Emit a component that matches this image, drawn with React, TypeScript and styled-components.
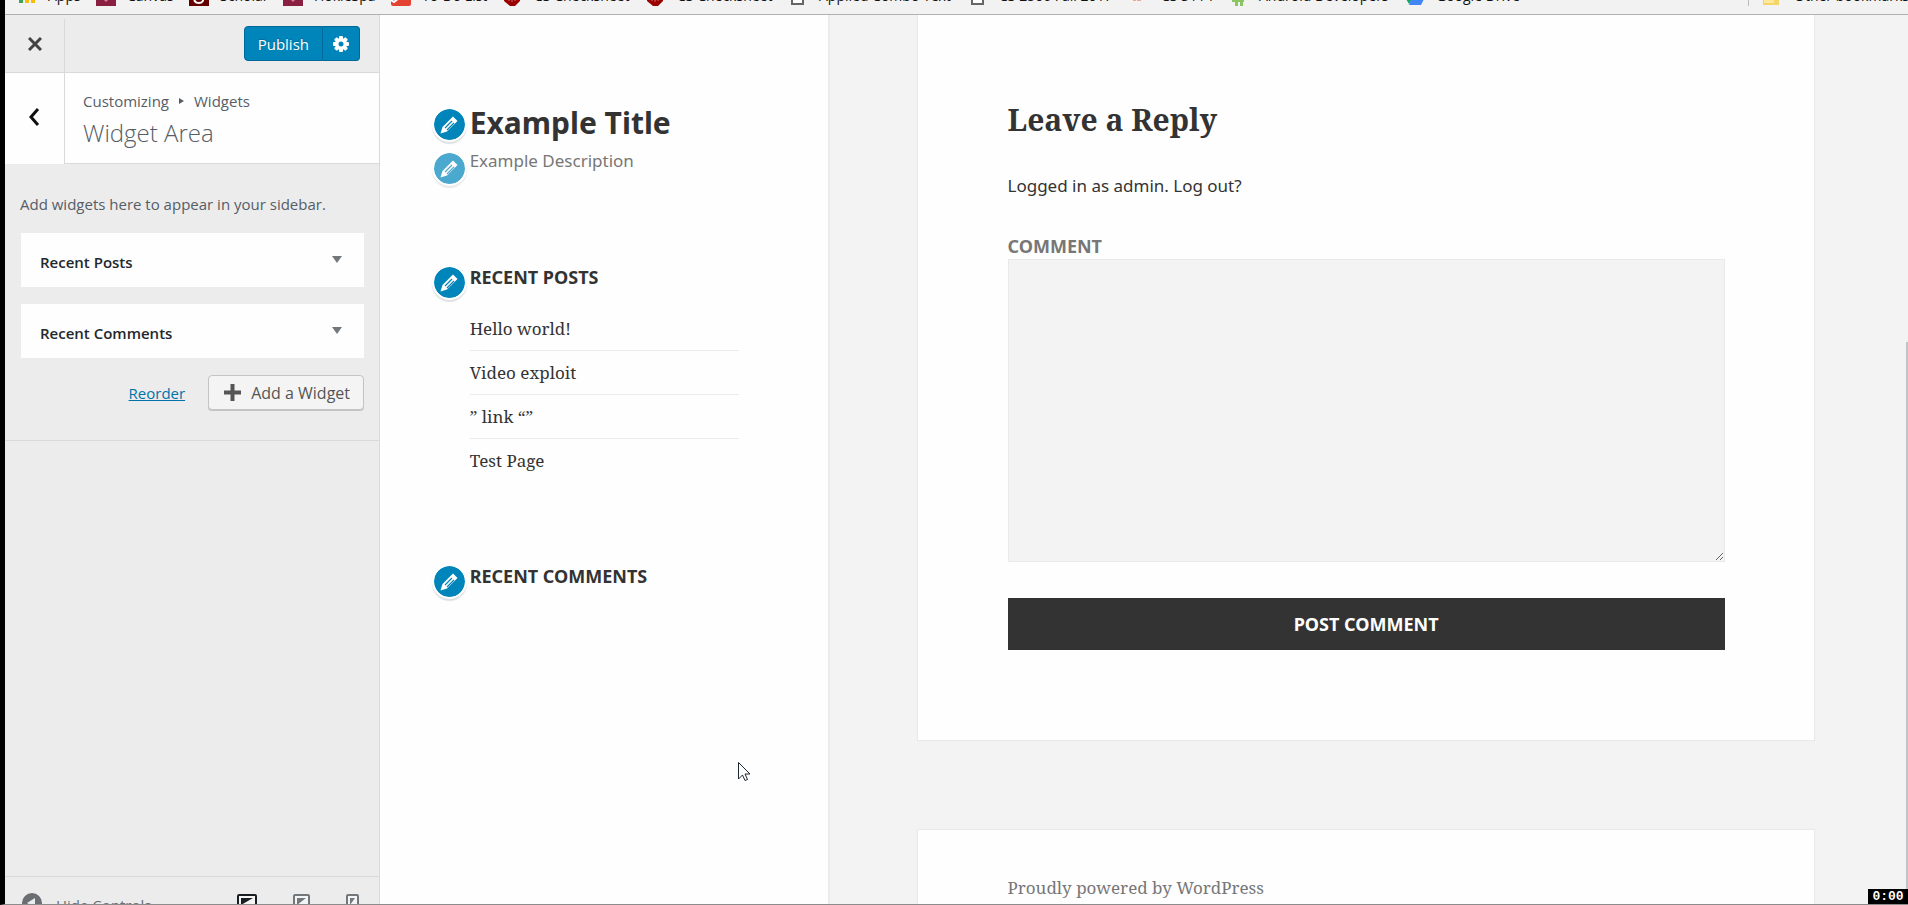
import React from "react";
import styled, { createGlobalStyle } from "styled-components";

const GlobalStyle = createGlobalStyle`
  *, *::before, *::after { box-sizing: border-box; }
  body { margin: 0; overflow: hidden; background: #f3f3f3; }
  h1, h2, h3, p, ul { margin: 0; padding: 0; font-weight: inherit; }
  ul { list-style: none; }
  button { font: inherit; cursor: pointer; margin: 0; }
  a { color: inherit; text-decoration: none; }
`;

const ui = `"Segoe UI", "Open Sans", "Noto Sans", sans-serif`;
const sans = `"Noto Sans", "Open Sans", sans-serif`;
const serif = `"Noto Serif", "DejaVu Serif Condensed", "DejaVu Serif", serif`;

const Screen = styled.div`
  position: relative;
  display: flex;
  flex-direction: column;
  height: 100vh;
  overflow: hidden;
  border-left: 5px solid #000;
  border-bottom: 1px solid #8c8c8c;
`;

/* ---------- bookmarks bar ---------- */

const BookmarksBar = styled.nav`
  flex: none;
  display: flex;
  align-items: flex-end;
  height: 15px;
  padding: 0 0 8px 12px;
  overflow: hidden;
  background: #f2f2f2;
  border-bottom: 1px solid #b1b1b1;
  font: 14px/20px ${ui};
  color: #111;
  white-space: nowrap;
`;

const Bookmark = styled.a<{ $width: number }>`
  flex: none;
  display: flex;
  align-items: flex-end;
  gap: 11px;
  width: ${(p) => p.$width}px;
  svg { flex: none; display: block; width: 20px; height: 20px; }
`;

const OtherBookmarks = styled(Bookmark)`
  margin-left: auto;
  padding-left: 14px;
  border-left: 1px solid #bbb;
`;

/* ---------- customizer panel ---------- */

const Workspace = styled.div`
  flex: 1;
  min-height: 0;
  display: flex;
`;

const Panel = styled.aside`
  flex: none;
  display: flex;
  flex-direction: column;
  width: 375px;
  background: #ececec;
  border-right: 1px solid #d9d9d9;
  font: 15px/24px ${ui};
  color: #555d66;
`;

const PanelHeader = styled.header`
  flex: none;
  display: flex;
  align-items: center;
  justify-content: space-between;
  height: 58px;
  padding: 4px 19px 0 0;
  border-bottom: 1px solid #d9d9d9;
`;

const IconButton = styled.button<{ $fill?: string }>`
  flex: none;
  display: flex;
  align-items: center;
  justify-content: center;
  align-self: stretch;
  width: 60px;
  padding: 0 0 4px;
  border: 0;
  border-right: 1px solid #d9d9d9;
  background: ${(p) => p.$fill || "transparent"};
  color: #444;
`;

const PublishGroup = styled.div`
  display: flex;
  height: 39px;
  padding-bottom: 4px;
`;

const PublishButton = styled.button`
  display: flex;
  align-items: center;
  justify-content: center;
  padding: 0 13px;
  background: #0085ba;
  border: 1px solid #006799;
  border-radius: 4px 0 0 4px;
  color: #fff;
  text-shadow: 0 -1px 1px #006799;
`;

const SettingsButton = styled(PublishButton)`
  width: 37px;
  padding: 0;
  border-left-width: 0;
  border-radius: 0 4px 4px 0;
`;

const SectionHead = styled.div`
  flex: none;
  display: flex;
  height: 91px;
  background: #fefefe;
`;

const SectionTitle = styled.div`
  flex: 1;
  padding: 16px 0 0 18px;
  border-bottom: 1px solid #d9d9d9;
`;

const Crumbs = styled.p`
  display: flex;
  align-items: center;
  gap: 10px;
`;

const PanelTitle = styled.h1`
  font-size: 24px;
  font-weight: 300;
  line-height: 40px;
`;

const SectionBody = styled.section`
  flex: none;
  display: flex;
  flex-direction: column;
  padding: 28px 15px 30px 16px;
  border-bottom: 1px solid #d9d9d9;
`;

const Hint = styled.p`
  margin: 0 0 17px -1px;
  white-space: nowrap;
`;

const WidgetCard = styled.button`
  display: flex;
  align-items: center;
  justify-content: space-between;
  height: 54px;
  margin-bottom: 17px;
  padding: 4px 22px 0 19px;
  border: 0;
  background: #fefefe;
  color: #23282d;
  font-weight: 600;
  svg { margin-bottom: 6px; }
`;

const WidgetActions = styled.div`
  display: flex;
  align-items: center;
  justify-content: flex-end;
  gap: 23px;
`;

const ReorderButton = styled.button`
  padding: 0;
  border: 0;
  background: none;
  color: #0073aa;
  text-decoration: underline;
`;

const AddButton = styled.button`
  display: flex;
  align-items: center;
  gap: 10px;
  height: 35px;
  padding: 0 13px 0 15px;
  background: #f4f4f4;
  border: 1px solid #c4c4c4;
  border-radius: 4px;
  box-shadow: 0 1px 0 #c4c4c4;
  color: #555;
  font-size: 16px;
  white-space: nowrap;
`;

const PanelFooter = styled.footer`
  flex: none;
  display: flex;
  align-items: flex-start;
  justify-content: space-between;
  height: 28px;
  margin-top: auto;
  padding: 16px 20px 0 17px;
  overflow: hidden;
  border-top: 1px solid #d9d9d9;
`;

const FooterButton = styled.button`
  display: flex;
  align-items: flex-start;
  gap: 14px;
  padding: 0;
  border: 0;
  background: none;
  color: #6a6e73;
`;

const Devices = styled.div`
  display: flex;
  gap: 36px;
`;

/* ---------- site preview ---------- */

const Preview = styled.main`
  flex: 1;
  display: grid;
  grid-template-columns: 5fr 1fr 10fr 1fr;
  padding-right: 4px;
  background: #f3f3f3;
  font-family: ${sans};
  color: #333;
`;

const SiteSidebar = styled.div`
  padding: 86px 20% 0;
  background: #fefefe;
  box-shadow: 0 0 0 2px #ebebeb;
  clip-path: inset(0 -2px 0 0);
`;

const Branding = styled.header`
  padding-bottom: 6px;
`;

const Editable = styled.div`
  position: relative;
`;

const EditShortcut = styled.button<{ $faded?: boolean; $top: number }>`
  position: absolute;
  left: -38px;
  top: ${(p) => p.$top}px;
  display: flex;
  align-items: center;
  justify-content: center;
  width: 35px;
  height: 35px;
  padding: 0;
  border: 2px solid #fff;
  border-radius: 50%;
  background: #0085ba;
  background-clip: padding-box;
  box-shadow: 0 2px 1px rgba(46, 68, 83, 0.15);
  color: #fff;
  opacity: ${(p) => (p.$faded ? 0.7 : 1)};
`;

const SiteTitle = styled.h1`
  font-size: 30px;
  font-weight: 700;
  line-height: 44px;
  white-space: nowrap;
`;

const SiteDescription = styled.p`
  font-size: 17px;
  line-height: 32px;
  color: #777;
`;

const SiteWidget = styled.section`
  position: relative;
  margin-top: 80px;
`;

const WidgetTitle = styled.h2`
  margin-bottom: 16px;
  font-size: 18px;
  font-weight: 700;
  line-height: 28px;
  white-space: nowrap;
`;

const PostList = styled.ul`
  font: 17px/27px ${serif};
`;

const Post = styled.li`
  padding: 8px 0;
  & + & { border-top: 1px solid #ebebeb; }
`;

const Content = styled.div`
  grid-column: 3;
  display: flex;
  flex-direction: column;
  gap: 90px;
  overflow: hidden;
  margin: 0 -2px;
  padding: 0 2px;
`;

const Sheet = styled.section`
  padding: 0 10%;
  background: #fefefe;
  box-shadow: 0 0 1px 1px #e9e9e9;
`;

const CommentForm = styled.form`
  display: flex;
  flex-direction: column;
  padding: 83px 0 90px;
`;

const ReplyTitle = styled.h3`
  font: 700 30px/44px ${serif};
`;

const LoggedIn = styled.p`
  margin: 30px 0 33px;
  font-size: 17px;
  line-height: 28px;
`;

const CommentLabel = styled.label`
  font-size: 18px;
  font-weight: 700;
  line-height: 26px;
  color: #777;
`;

const CommentBox = styled.textarea`
  width: 100%;
  height: 303px;
  margin-bottom: 36px;
  border: 1px solid #e9e9e9;
  background: #f3f3f3;
  resize: vertical;
  outline: 0;
`;

const SubmitButton = styled.button`
  height: 52px;
  border: 0;
  background: #333;
  color: #fff;
  font-size: 18px;
  font-weight: 700;
`;

const SiteInfo = styled.p`
  padding: 43px 0;
  font: 17px/30px ${serif};
  color: #777;
`;

/* ---------- overlays ---------- */

const ScrollThumb = styled.div`
  position: absolute;
  right: 0;
  top: 342px;
  bottom: 0;
  width: 2px;
  background: #c1c4c4;
`;

const Timer = styled.time`
  position: absolute;
  right: 0;
  bottom: -1px;
  width: 40px;
  height: 16px;
  background: #000;
  color: #fff;
  font: 700 13px/16px "Liberation Mono", monospace;
  text-align: center;
`;

const Pointer = styled.svg`
  position: absolute;
  left: 733px;
  top: 762px;
`;

/* ---------- icons ---------- */

const AppsIcon = () => (
  <svg viewBox="0 0 20 20"><rect x="2" y="13" width="4" height="4" fill="#3aa757" /><rect x="8" y="13" width="4" height="4" fill="#fbbc05" /><rect x="14" y="13" width="4" height="4" fill="#fbbc05" /></svg>
);
const VtIcon = () => (
  <svg viewBox="0 0 20 20"><rect width="20" height="20" fill="#8b1f41" /><path d="M8 13l2 2 2-2" fill="none" stroke="#c98099" strokeWidth="1.5" /></svg>
);
const ScholarIcon = () => (
  <svg viewBox="0 0 20 20"><rect width="20" height="20" fill="#660000" /><path d="M14 11c1 4-1 6-4 6-4 0-6-3-3-4" fill="none" stroke="#fff" strokeWidth="2" /></svg>
);
const TodoIcon = () => (
  <svg viewBox="0 0 20 20"><rect width="20" height="20" rx="2" fill="#e44332" /><path d="M0 14l3 2 5-4" fill="none" stroke="#fff" strokeWidth="2" /></svg>
);
const BugIcon = () => (
  <svg viewBox="0 0 20 20"><path d="M1 6h16v9l-5 5H7l-6-5z" fill="#900" /><path d="M6 15v-3m3 4v-4m3 3v-3" stroke="#d66" /></svg>
);
const PageIcon = () => (
  <svg viewBox="0 0 20 20"><path d="M4 1h11v17H4z" fill="#fff" stroke="#666" strokeWidth="2" /></svg>
);
const DotsIcon = () => (
  <svg viewBox="0 0 20 20"><path d="M3 12h3v3H3zM7 12h4v3H7z" fill="#efa78f" /></svg>
);
const AndroidIcon = () => (
  <svg viewBox="0 0 20 20"><path d="M4 6h12v10h-1v4h-3v-4h-2v4H7v-4H4z" fill="#8bc562" /></svg>
);
const DriveIcon = () => (
  <svg viewBox="0 0 20 20"><path d="M1 13l7-11 3 5-7 11z" fill="#11a861" /><path d="M7 11h13l-4 8H4z" fill="#4285f4" /></svg>
);
const FolderIcon = () => (
  <svg viewBox="0 0 20 20"><path d="M0 4h16v15H0z" fill="#f5d567" /><path d="M1 7h10v10H1z" fill="#ffe79b" /></svg>
);

const CloseIcon = () => (
  <svg width="14" height="14" viewBox="0 0 14 14"><path d="M1 1l12 12M13 1L1 13" stroke="currentColor" strokeWidth="3" /></svg>
);
const BackIcon = () => (
  <svg width="12" height="18" viewBox="0 0 12 18"><path d="M9 1L2 9l7 8" fill="none" stroke="#111" strokeWidth="3" /></svg>
);
const GearIcon = () => (
  <svg width="16" height="16" viewBox="0 0 16 16" fill="currentColor">
    {[0, 45, 90, 135].map((a) => (
      <rect key={a} x="6" y="0" width="4" height="16" rx="1" transform={`rotate(${a} 8 8)`} />
    ))}
    <circle cx="8" cy="8" r="6" />
    <circle cx="8" cy="8" r="2.5" fill="#0085ba" />
  </svg>
);
const CaretDown = () => (
  <svg width="10" height="7" viewBox="0 0 10 7"><path d="M0 0h10L5 7z" fill="#72777c" /></svg>
);
const CaretRight = () => (
  <svg width="5" height="6" viewBox="0 0 5 6"><path d="M0 0l5 3-5 3z" fill="#555d66" /></svg>
);
const PlusIcon = () => (
  <svg width="17" height="17" viewBox="0 0 17 17"><path d="M8.5 0v17M0 8.5h17" stroke="#555" strokeWidth="4" /></svg>
);
const PencilIcon = () => (
  <svg width="18" height="18" viewBox="0 0 18 18">
    <path d="M13 .5L17.5 5 7 15.500 .5 17.500 2.500 11z" fill="currentColor" />
    <path d="M5 12L12 5M7 14L14 7" stroke="#0085ba" strokeWidth="1.2" />
  </svg>
);
const CollapseIcon = () => (
  <svg width="20" height="20" viewBox="0 0 20 20"><circle cx="10" cy="10" r="10" fill="#6a6e73" /><path d="M5 10l8-5v10z" fill="#ececec" /></svg>
);
const DeviceIcon = ({ width, color }: { width: number; color: string }) => (
  <svg width={width} height="20" viewBox={`0 0 ${width} 20`}>
    <rect x="1" y="2" width={width - 2} height="16" rx="1" fill="#f4f4f4" stroke={color} strokeWidth="2" />
    <path d={`M4 5h${width - 8}L4 12z`} fill={color} />
  </svg>
);

const bookmarks: { name: string; width: number; Icon: React.FC }[] = [
  { name: "Apps", width: 79, Icon: AppsIcon },
  { name: "Canvas", width: 93, Icon: VtIcon },
  { name: "Scholar", width: 94, Icon: ScholarIcon },
  { name: "HokieSpa", width: 108, Icon: VtIcon },
  { name: "To-Do List", width: 112, Icon: TodoIcon },
  { name: "CS Checksheet", width: 143, Icon: BugIcon },
  { name: "CS Checksheet", width: 142, Icon: BugIcon },
  { name: "Applied Combo Text", width: 180, Icon: PageIcon },
  { name: "CS 2506 Fall 2017", width: 162, Icon: PageIcon },
  { name: "CS 3114", width: 98, Icon: DotsIcon },
  { name: "Android Developers", width: 177, Icon: AndroidIcon },
  { name: "Google Drive", width: 130, Icon: DriveIcon },
];

const posts = ["Hello world!", "Video exploit", "” link “”", "Test Page"];

const EditButton = ({ label, top, faded }: { label: string; top: number; faded?: boolean }) => (
  <EditShortcut type="button" aria-label={label} $top={top} $faded={faded}>
    <PencilIcon />
  </EditShortcut>
);

export default function App() {
  return (
    <Screen>
      <GlobalStyle />
      <BookmarksBar>
        {bookmarks.map(({ name, width, Icon }, i) => (
          <Bookmark key={i} href="#" $width={width}>
            <Icon />
            {name}
          </Bookmark>
        ))}
        <OtherBookmarks href="#" $width={160}>
          <FolderIcon />
          Other bookmarks
        </OtherBookmarks>
      </BookmarksBar>

      <Workspace>
        <Panel>
          <PanelHeader>
            <IconButton type="button" aria-label="Close"><CloseIcon /></IconButton>
            <PublishGroup>
              <PublishButton type="button">Publish</PublishButton>
              <SettingsButton type="button" aria-label="Publish settings"><GearIcon /></SettingsButton>
            </PublishGroup>
          </PanelHeader>

          <SectionHead>
            <IconButton type="button" aria-label="Back" $fill="#fefefe"><BackIcon /></IconButton>
            <SectionTitle>
              <Crumbs>Customizing <CaretRight /> Widgets</Crumbs>
              <PanelTitle>Widget Area</PanelTitle>
            </SectionTitle>
          </SectionHead>

          <SectionBody>
            <Hint>Add widgets here to appear in your sidebar.</Hint>
            <WidgetCard type="button">Recent Posts <CaretDown /></WidgetCard>
            <WidgetCard type="button">Recent Comments <CaretDown /></WidgetCard>
            <WidgetActions>
              <ReorderButton type="button">Reorder</ReorderButton>
              <AddButton type="button"><PlusIcon /> Add a Widget</AddButton>
            </WidgetActions>
          </SectionBody>

          <PanelFooter>
            <FooterButton type="button"><CollapseIcon /> Hide Controls</FooterButton>
            <Devices>
              <FooterButton type="button" aria-label="Desktop preview"><DeviceIcon width={20} color="#191e23" /></FooterButton>
              <FooterButton type="button" aria-label="Tablet preview"><DeviceIcon width={17} color="#72777c" /></FooterButton>
              <FooterButton type="button" aria-label="Mobile preview"><DeviceIcon width={13} color="#72777c" /></FooterButton>
            </Devices>
          </PanelFooter>
        </Panel>

        <Preview>
          <SiteSidebar>
            <Branding>
              <Editable>
                <EditButton label="Edit title" top={6} />
                <SiteTitle>Example Title</SiteTitle>
              </Editable>
              <Editable>
                <EditButton label="Edit description" top={6} faded />
                <SiteDescription>Example Description</SiteDescription>
              </Editable>
            </Branding>
            <SiteWidget>
              <EditButton label="Edit recent posts" top={2} />
              <WidgetTitle>RECENT POSTS</WidgetTitle>
              <PostList>
                {posts.map((post) => (
                  <Post key={post}><a href="#">{post}</a></Post>
                ))}
              </PostList>
            </SiteWidget>
            <SiteWidget>
              <EditButton label="Edit recent comments" top={2} />
              <WidgetTitle>RECENT COMMENTS</WidgetTitle>
            </SiteWidget>
          </SiteSidebar>

          <Content>
            <Sheet>
              <CommentForm>
                <ReplyTitle>Leave a Reply</ReplyTitle>
                <LoggedIn><a href="#">Logged in as admin</a>. <a href="#">Log out?</a></LoggedIn>
                <CommentLabel htmlFor="comment">COMMENT</CommentLabel>
                <CommentBox id="comment" />
                <SubmitButton type="button">POST COMMENT</SubmitButton>
              </CommentForm>
            </Sheet>
            <Sheet as="footer">
              <SiteInfo><a href="#">Proudly powered by WordPress</a></SiteInfo>
            </Sheet>
          </Content>
        </Preview>
      </Workspace>

      <ScrollThumb />
      <Timer>0:00</Timer>
      <Pointer width="14" height="21" viewBox="0 0 14 21">
        <path d="M.5 .5V17l4-4 2.5 5.5 2.5-1L7 12h5z" fill="#fff" stroke="#1d2733" />
      </Pointer>
    </Screen>
  );
}
